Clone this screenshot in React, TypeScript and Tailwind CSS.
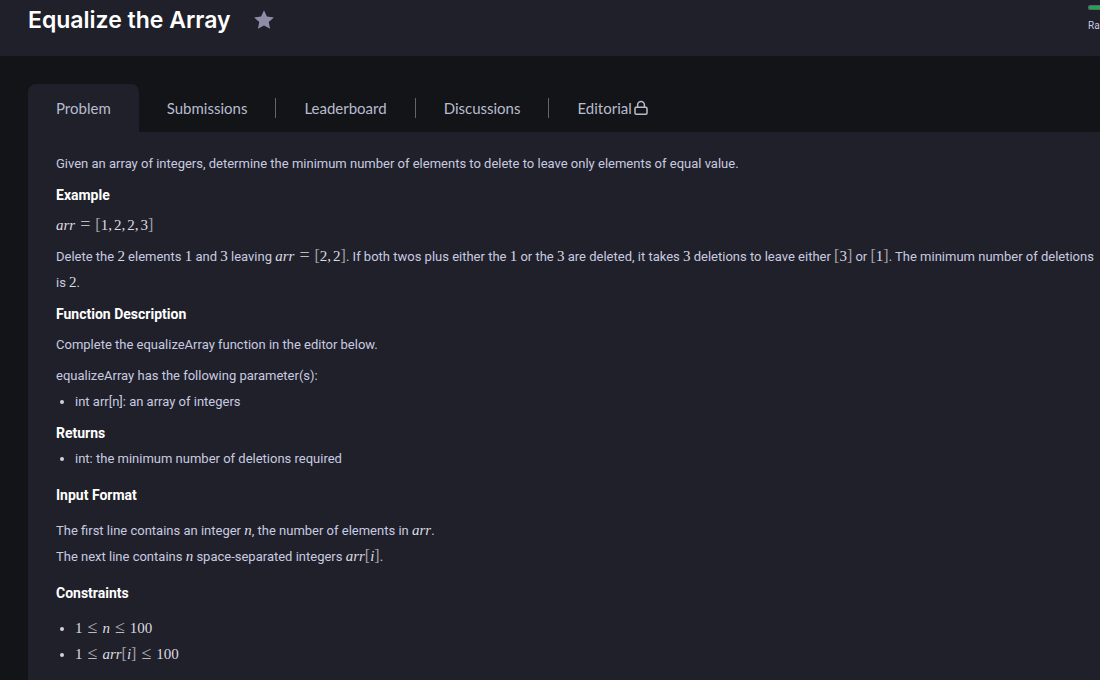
import type { ReactNode } from "react";

function Num({ children }: { children: ReactNode }) {
  return <span className="font-['Liberation_Serif',serif] text-[15px] leading-none text-[#dcdce0]">{children}</span>;
}

function Var({ children }: { children: ReactNode }) {
  return (
    <i className="font-['Liberation_Serif',serif] text-[15px] leading-none text-[#dcdce0]">{children}</i>
  );
}

function Op({ children }: { children: ReactNode }) {
  return (
    <span className="mx-[5px] font-['Liberation_Serif',serif] text-[18px] leading-none text-[#b9b9be]">{children}</span>
  );
}

function Bracket({ children }: { children: ReactNode }) {
  return (
    <span className="font-['Liberation_Serif',serif] text-[16px] leading-none text-[#a2a2a8]">{children}</span>
  );
}

function List({ items }: { items: number[] }) {
  return (
    <span className="whitespace-nowrap">
      <Bracket>[</Bracket>
      {items.map((n, i) => (
        <span key={i}>
          {i > 0 && <span className="mr-[2px]"><Num>,</Num></span>}
          <Num>{n}</Num>
        </span>
      ))}
      <Bracket>]</Bracket>
    </span>
  );
}

function Indexed() {
  return (
    <span className="whitespace-nowrap">
      <Var>arr</Var>
      <Bracket>[</Bracket>
      <Var>i</Var>
      <Bracket>]</Bracket>
    </span>
  );
}

function Heading({ children }: { children: ReactNode }) {
  return <h2 className="text-[14px] leading-[26px] font-bold text-white">{children}</h2>;
}

function Bullets({ children }: { children: ReactNode }) {
  return <ul className="list-disc pl-[19px] marker:text-[#d0d0de]">{children}</ul>;
}

function LockIcon() {
  return (
    <svg
      className="h-4 w-4"
      viewBox="0 0 16 16"
      fill="none"
      stroke="currentColor"
      strokeWidth="1.5"
      strokeLinecap="round"
      strokeLinejoin="round"
      aria-hidden="true"
    >
      <rect x="2" y="7.2" width="12" height="7" rx="1.2" />
      <path d="M4.6 7V5a3.4 3.4 0 0 1 6.8 0v2" />
    </svg>
  );
}

const tabs = ["Submissions", "Leaderboard", "Discussions", "Editorial"];

export default function App() {
  return (
    <div className="min-h-screen overflow-hidden bg-[#131417] font-[Roboto,sans-serif] text-[13px] leading-[26px] text-[#c8cbe0]">
      <header className="flex h-14 items-start justify-between bg-[#20202a] pl-7">
        <div className="flex items-center gap-[21px] pt-1">
          <h1 className="font-[Inter,sans-serif] text-[23px] leading-8 font-semibold text-white">Equalize the Array</h1>
          <button type="button" aria-label="Bookmark" className="text-[#8d8da8]">
            <svg className="h-6 w-6" viewBox="0 0 24 24" fill="currentColor" aria-hidden="true">
              <path d="M12 2.3l2.9 6.3 7 .8-5.2 4.7 1.4 6.6L12 17.4l-6.1 3.3 1.4-6.6L2.1 9.4l7-.8z" />
            </svg>
          </button>
        </div>
        <div className="w-3 overflow-hidden pt-[5px]">
          <div className="h-[5px] rounded-l-full border border-r-0 border-[#5c6670] bg-[#1ba94c]" />
          <p className="mt-2 text-[10px] leading-4 whitespace-nowrap">Ra</p>
        </div>
      </header>

      <main className="pt-7 pl-7">
        <nav className="flex h-12 font-[Lato,sans-serif] text-[15px] text-[#b7bccf]">
          <a href="#problem" aria-current="page" className="flex items-center rounded-t-lg bg-[#20202a] px-7">
            Problem
          </a>
          {tabs.map((tab, i) => (
            <div key={tab} className="flex items-center">
              {i > 0 && <span className="h-5 w-px bg-[#62646f]" />}
              <a href={`#${tab.toLowerCase()}`} className="flex items-center gap-px px-7">
                {tab}
                {tab === "Editorial" && <LockIcon />}
              </a>
            </div>
          ))}
        </nav>

        <article className="min-h-[calc(100vh-132px)] bg-[#20202a] pt-[19px] pl-7">
          <section className="flex flex-col gap-[5px]">
            <p>
              Given an array of integers, determine the minimum number of elements to delete to leave only elements of
              equal value.
            </p>
            <Heading>Example</Heading>
            <p>
              <Var>arr</Var>
              <Op>=</Op>
              <List items={[1, 2, 2, 3]} />
            </p>
            <p>
              Delete the <Num>2</Num> elements <Num>1</Num> and <Num>3</Num> leaving <Var>arr</Var>
              <Op>=</Op>
              <List items={[2, 2]} />. If both twos plus either the <Num>1</Num> or the <Num>3</Num> are deleted, it
              takes <Num>3</Num> deletions to leave either <List items={[3]} /> or <List items={[1]} />. The minimum
              number of deletions is <Num>2</Num>.
            </p>
            <Heading>Function Description</Heading>
            <p>Complete the equalizeArray function in the editor below.</p>
            <div>
              <p>equalizeArray has the following parameter(s):</p>
              <Bullets>
                <li>int arr[n]: an array of integers</li>
              </Bullets>
            </div>
            <div>
              <Heading>Returns</Heading>
              <Bullets>
                <li>int: the minimum number of deletions required</li>
              </Bullets>
            </div>
          </section>

          <section className="flex flex-col gap-[10px] py-[10px]">
            <Heading>Input Format</Heading>
            <div>
              <p>
                The first line contains an integer <Var>n</Var>, the number of elements in <Var>arr</Var>.
              </p>
              <p>
                The next line contains <Var>n</Var> space-separated integers <Indexed />.
              </p>
            </div>
            <Heading>Constraints</Heading>
            <Bullets>
              <li>
                <Num>1</Num>
                <Op>≤</Op>
                <Var>n</Var>
                <Op>≤</Op>
                <Num>100</Num>
              </li>
              <li>
                <Num>1</Num>
                <Op>≤</Op>
                <Indexed />
                <Op>≤</Op>
                <Num>100</Num>
              </li>
            </Bullets>
          </section>
        </article>
      </main>
    </div>
  );
}
